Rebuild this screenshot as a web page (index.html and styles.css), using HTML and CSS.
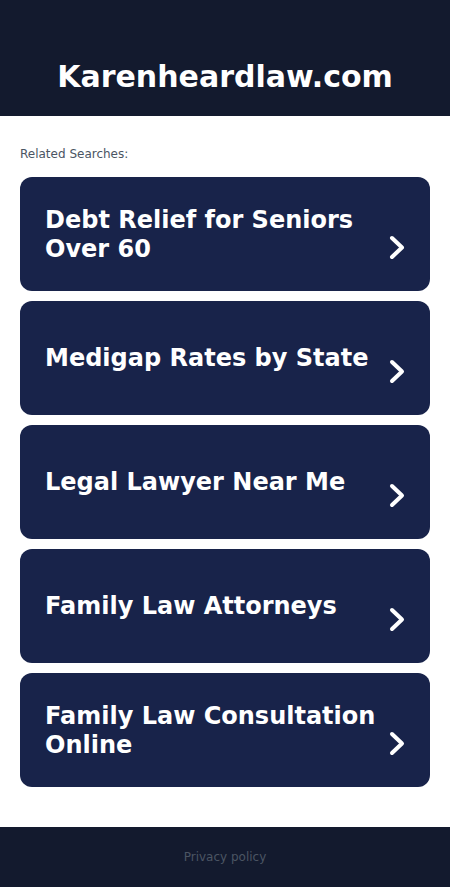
FILE: index.html
```html
<!DOCTYPE html>
<html lang="en">
<head>
<meta charset="utf-8">
<title>Karenheardlaw.com</title>
<link rel="stylesheet" href="styles.css">
</head>
<body>
<header class="site-header">
  <h1 class="site-title">Karenheardlaw.com</h1>
</header>
<main class="content">
  <p class="related-label">Related Searches:</p>
  <div class="cards">
    <a class="card" href="#"><span class="card-text">Debt Relief for Seniors Over 60</span><svg class="chev" viewBox="0 0 16 25" width="16" height="25"><path d="M3 3 L13 12.5 L3 22" fill="none" stroke="#fff" stroke-width="4" stroke-linecap="round" stroke-linejoin="round"/></svg></a>
    <a class="card" href="#"><span class="card-text">Medigap Rates by State</span><svg class="chev" viewBox="0 0 16 25" width="16" height="25"><path d="M3 3 L13 12.5 L3 22" fill="none" stroke="#fff" stroke-width="4" stroke-linecap="round" stroke-linejoin="round"/></svg></a>
    <a class="card" href="#"><span class="card-text">Legal Lawyer Near Me</span><svg class="chev" viewBox="0 0 16 25" width="16" height="25"><path d="M3 3 L13 12.5 L3 22" fill="none" stroke="#fff" stroke-width="4" stroke-linecap="round" stroke-linejoin="round"/></svg></a>
    <a class="card" href="#"><span class="card-text">Family Law Attorneys</span><svg class="chev" viewBox="0 0 16 25" width="16" height="25"><path d="M3 3 L13 12.5 L3 22" fill="none" stroke="#fff" stroke-width="4" stroke-linecap="round" stroke-linejoin="round"/></svg></a>
    <a class="card" href="#"><span class="card-text">Family Law Consultation Online</span><svg class="chev" viewBox="0 0 16 25" width="16" height="25"><path d="M3 3 L13 12.5 L3 22" fill="none" stroke="#fff" stroke-width="4" stroke-linecap="round" stroke-linejoin="round"/></svg></a>
  </div>
</main>
<footer class="site-footer">
  <a class="privacy" href="#">Privacy policy</a>
</footer>
</body>
</html>
```
FILE: styles.css
```css
* { box-sizing: border-box; }
body {
  margin: 0;
  font-family: "DejaVu Sans", "Liberation Sans", sans-serif;
  background: #ffffff;
}
.site-header {
  background: #131a2e;
  height: 116px;
  padding-top: 59px;
  text-align: center;
}
.site-title {
  margin: 0;
  color: #ffffff;
  font-size: 30px;
  line-height: 36px;
  font-weight: bold;
}
.content {
  padding: 30px 20px 40px;
}
.related-label {
  margin: 0 0 15px;
  font-size: 12px;
  line-height: 16px;
  color: #4b5563;
}
.cards {
  display: flex;
  flex-direction: column;
  gap: 10px;
}
.card {
  display: flex;
  align-items: center;
  height: 114px;
  padding: 1px 25px 0;
  background: #18234a;
  border-radius: 12px;
  text-decoration: none;
  color: #ffffff;
}
.card-text {
  flex: 1;
  font-size: 24px;
  line-height: 29px;
  font-weight: bold;
  padding-right: 12px;
}
.chev {
  flex: none;
  margin-top: 26px;
}
.site-footer {
  background: #131a2e;
  height: 60px;
  display: flex;
  align-items: center;
  justify-content: center;
}
.privacy {
  font-size: 12px;
  color: #4b5563;
  text-decoration: none;
}
```
